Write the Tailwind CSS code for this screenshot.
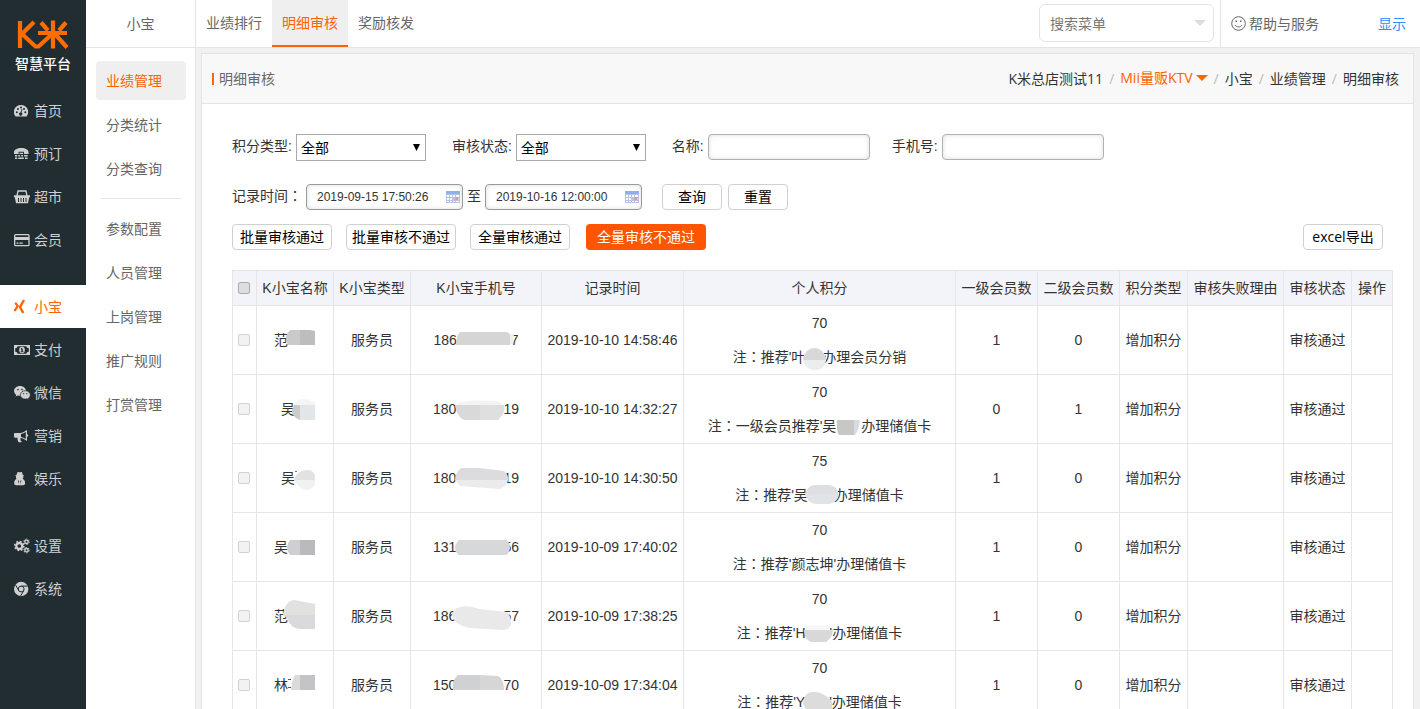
<!DOCTYPE html>
<html lang="zh-CN">
<head>
<meta charset="utf-8">
<title>明细审核</title>
<script src="https://cdn.jsdelivr.net/npm/@tailwindcss/browser@4"></script>
</head>
<body class="flex h-screen overflow-hidden bg-[#f1f1f1] font-['Open_Sans','Noto_Sans_CJK_SC',sans-serif] text-sm leading-5 text-[#333]">

<!-- Primary navigation -->
<nav class="w-[86px] shrink-0 bg-[#222d32] text-[#d0d0d0]">
  <a href="#" class="flex h-[89px] flex-col items-center pt-[19px] text-white">
    <svg class="w-[52px] h-[31px] shrink-0" viewBox="0 0 52 31" fill="none" stroke="#ff6c00" stroke-width="4.200" aria-hidden="true">
      <path d="M3 2v27M17 3 5 15l13.500 12.500h3L34 16M36 1.500v28M21 14h29M24 3.500l7 8M49 3.500l-7 8M38 15l12 13.500"/>
    </svg>
    <span class="mt-1 text-sm font-medium leading-5">智慧平台</span>
  </a>
  <ul>
    <li><a href="#" class="flex h-[43px] items-center gap-1 pl-[14px]">
      <svg class="h-4 w-4 shrink-0" viewBox="0 0 16 16" aria-hidden="true"><path fill="currentColor" d="M7 2a7 7 0 0 0-6 10.800l.6.7h10.800l.6-.7A7 7 0 0 0 7 2z"/><g fill="#222d32"><circle cx="2.800" cy="9.200" r="1"/><circle cx="4" cy="6" r="1"/><circle cx="7" cy="4.600" r="1"/><circle cx="10" cy="6" r="1"/><circle cx="11.300" cy="9.200" r="1"/><path d="m8.500 6.200-1 3.400a1.600 1.600 0 1 1-1-.2l1.200-3.500z"/></g></svg>
      首页</a></li>
    <li><a href="#" class="flex h-[43px] items-center gap-1 pl-[14px]">
      <svg class="h-4 w-4 shrink-0" viewBox="0 0 16 16" fill="currentColor" aria-hidden="true"><path d="M0 6.500C0 3.500 3.200 2 7.300 2s7.300 1.500 7.300 4.500V8H10V5.800H4.600V8H0z"/><path d="M1 9h2.200v1.500H1zM4.300 9h1.800v1.500H4.300zM7.200 9H9v1.500H7.200zM10.100 9h3.500v1.500h-3.500zM1 11.500h2.200V13H1zM4.300 11.500h5.500V13H4.300zM11 11.500h2.600V13H11zM5.500 6.800h3.600V8H5.500z"/></svg>
      预订</a></li>
    <li><a href="#" class="flex h-[43px] items-center gap-1 pl-[14px]">
      <svg class="h-4 w-4 shrink-0" viewBox="0 0 16 16" aria-hidden="true"><path fill="none" stroke="currentColor" stroke-width="1.300" d="M3 7l1-5h8l1 5"/><path fill="currentColor" d="M0 6.300h16v2h-.8l-1.200 6H2l-1.200-6H0z"/><path stroke="#222d32" d="M4.500 9v4M7 9v4M9.500 9v4M12 9v4"/></svg>
      超市</a></li>
    <li><a href="#" class="flex h-[43px] items-center gap-1 pl-[14px]">
      <svg class="h-4 w-4 shrink-0" viewBox="0 0 16 16" aria-hidden="true"><rect x=".7" y="2.700" width="14.300" height="11" rx="1" fill="none" stroke="currentColor" stroke-width="1.300"/><path fill="currentColor" d="M1 5h14v3H1zM2.500 10.500h2v1.200h-2zM5.500 10.500h3.200v1.200H5.500z"/></svg>
      会员</a></li>
    <li class="mt-6"><a href="#" aria-current="page" class="flex h-[43px] items-center gap-1 bg-white pl-[14px] text-[#ff6200]">
      <svg class="h-4 w-4 shrink-0" viewBox="0 0 16 16" fill="none" stroke="currentColor" aria-hidden="true"><path stroke-width="2.400" d="M10 1 6 8l3.300 6"/><path stroke-width="2.200" d="M.8 4.500h1.200l1.700 2.600-2.600 4H0"/></svg>
      小宝</a></li>
    <li><a href="#" class="flex h-[43px] items-center gap-1 pl-[14px]">
      <svg class="h-4 w-4 shrink-0" viewBox="0 0 16 16" aria-hidden="true"><path fill="currentColor" d="M0 3h16v10H0z"/><path fill="#222d32" d="M3.500 4.200h9c0 1.300.8 2 2.300 2v3.600c-1.500 0-2.300.7-2.300 2h-9c0-1.300-.8-2-2.300-2V6.200c1.500 0 2.300-.7 2.300-2z"/><ellipse cx="8" cy="8" rx="2.800" ry="3.300" fill="currentColor"/><path stroke="#222d32" d="M7 6.700h1.200v3M6.700 9.700h2.700"/></svg>
      支付</a></li>
    <li><a href="#" class="flex h-[43px] items-center gap-1 pl-[14px]">
      <svg class="h-4 w-4 shrink-0 overflow-visible" viewBox="0 0 16 16" aria-hidden="true"><path fill="currentColor" d="M6 1C2.700 1 0 3.200 0 6c0 1.500.8 2.800 2.100 3.700l-.5 1.900 2.100-1.200c.7.300 1.500.4 2.300.4 3.300 0 6-2.100 6-4.800S9.300 1 6 1z"/><path fill="currentColor" stroke="#222d32" stroke-width=".7" d="M11.300 5.700c-2.800 0-5 1.900-5 4.200s2.200 4.200 5 4.200c.6 0 1.200-.1 1.800-.3l1.700 1-.4-1.600c1.200-.8 1.900-2 1.900-3.300 0-2.300-2.300-4.200-5-4.200z"/><g fill="#222d32"><circle cx="4" cy="4.600" r=".8"/><circle cx="8" cy="4.600" r=".8"/><circle cx="9.700" cy="8.700" r=".6"/><circle cx="12.900" cy="8.700" r=".6"/></g></svg>
      微信</a></li>
    <li><a href="#" class="flex h-[43px] items-center gap-1 pl-[14px]">
      <svg class="h-4 w-4 shrink-0" viewBox="0 0 16 16" aria-hidden="true"><path fill="currentColor" d="M13 2v4.200a1.200 1.200 0 0 1 0 2.400V13c-2-1.700-4-2.900-6.300-3.100-.6.900.1 1.600-.3 2.300.3.700.9 1.100 1.500 1.600-.9.700-3 .7-3.700 0-.3-1.300-1.100-2.500-.6-4H1.200A1.200 1.200 0 0 1 0 8.600V6.300c0-.7.5-1.200 1.200-1.200H5C7.800 5.100 10.500 4 13 2z"/><path fill="#222d32" d="M7 6.100c1.700-.3 3.300-1 4.800-2v6.800c-1.500-1-3.100-1.700-4.800-2z"/></svg>
      营销</a></li>
    <li><a href="#" class="flex h-[43px] items-center gap-1 pl-[14px]">
      <svg class="h-4 w-4 shrink-0" viewBox="0 0 16 16" aria-hidden="true"><path fill="currentColor" d="M3.300 1.500C4 .5 4.800 1.300 5.700 1.300S7.500.5 8.100 1.500l.7 2.500 1.500.7-1 .6c.1 1 0 1.800-.6 2.700 1.500.4 2.400 2 2.400 4 0 1.500-.7 2.200-2 2.200H2.200C.9 14.200.2 13.500.2 12c0-2 .9-3.600 2.300-4-.5-.9-.7-1.700-.5-2.700l-1-.6L2.500 4z"/><path fill="#222d32" d="M4 9l1.100 1.100L4.700 13zM7.400 9 6.300 10.100l.4 2.900z"/></svg>
      娱乐</a></li>
    <li class="mt-6"><a href="#" class="flex h-[43px] items-center gap-1 pl-[14px]">
      <svg class="h-4 w-4 shrink-0" viewBox="0 0 16 16" fill="none" stroke="currentColor" aria-hidden="true"><circle cx="5.300" cy="8" r="3" stroke-width="2.300"/><circle cx="5.300" cy="8" r="4.600" stroke-width="1.500" stroke-dasharray="1.800 1.810"/><circle cx="12.500" cy="3.800" r="1.700" stroke-width="1.400"/><circle cx="12.500" cy="3.800" r="2.700" stroke-dasharray="1.400 1.430"/><circle cx="12.500" cy="12.200" r="1.700" stroke-width="1.400"/><circle cx="12.500" cy="12.200" r="2.700" stroke-dasharray="1.400 1.430"/></svg>
      设置</a></li>
    <li><a href="#" class="flex h-[43px] items-center gap-1 pl-[14px]">
      <svg class="h-4 w-4 shrink-0" viewBox="0 0 16 16" aria-hidden="true"><circle cx="7.200" cy="8" r="7.200" fill="currentColor"/><circle cx="7.200" cy="8" r="2.900" fill="none" stroke="#222d32"/><path fill="none" stroke="#222d32" d="M7.200 5.100h6.400M4.700 9.500 1.600 4M9.700 9.500l-3.200 5.700"/></svg>
      系统</a></li>
  </ul>
</nav>

<!-- Secondary navigation -->
<nav class="w-[110px] shrink-0 border-r border-[#e4e4e4] bg-white text-[#666]">
  <h2 class="flex h-12 items-center justify-center border-b border-[#e4e4e4]">小宝</h2>
  <ul class="flex flex-col gap-[5px] px-[10px] pt-[13px]">
    <li><a href="#" aria-current="page" class="flex h-[39px] w-[90px] items-center rounded-sm bg-[#efefef] pl-[10px] text-[#ff6200]">业绩管理</a></li>
    <li><a href="#" class="flex h-[39px] items-center pl-[10px]">分类统计</a></li>
    <li><a href="#" class="flex h-[39px] items-center pl-[10px]">分类查询</a></li>
    <li aria-hidden="true" class="my-[5px] ml-[5px] h-px w-20 bg-[#e4e4e4]"></li>
    <li><a href="#" class="flex h-[39px] items-center pl-[10px]">参数配置</a></li>
    <li><a href="#" class="flex h-[39px] items-center pl-[10px]">人员管理</a></li>
    <li><a href="#" class="flex h-[39px] items-center pl-[10px]">上岗管理</a></li>
    <li><a href="#" class="flex h-[39px] items-center pl-[10px]">推广规则</a></li>
    <li><a href="#" class="flex h-[39px] items-center pl-[10px]">打赏管理</a></li>
  </ul>
</nav>

<div class="flex min-w-0 flex-1 flex-col">
  <header class="flex h-12 shrink-0 border-b border-[#e4e4e4] bg-white text-[#666]">
    <nav class="flex">
      <a href="#" class="flex items-center border-b-2 border-transparent px-[10px]">业绩排行</a>
      <a href="#" aria-current="page" class="flex items-center border-b-2 border-[#ff6200] bg-[#efefef] px-[10px] text-[#ff6200]">明细审核</a>
      <a href="#" class="flex items-center border-b-2 border-transparent px-[10px]">奖励核发</a>
    </nav>
    <div class="relative my-1 mr-[6px] ml-auto h-[38px] w-[175px]">
      <input type="text" aria-label="搜索菜单" placeholder="搜索菜单" class="h-full w-full rounded-md border border-[#e4e4e4] bg-white pr-7 pl-[10px] text-sm outline-none placeholder:text-[#777]">
      <svg class="absolute top-4 right-2 h-[6px] w-3" viewBox="0 0 12 6" fill="#ddd" aria-hidden="true"><path d="M0 0h12L6 6z"/></svg>
    </div>
    <div class="flex w-[200px] items-center justify-between border-l border-[#e4e4e4] pr-[14px] pl-[10px]">
      <a href="#" class="flex items-center gap-[3px]">
        <svg class="h-[15px] w-[15px]" viewBox="0 0 15 15" fill="none" stroke="#666" aria-hidden="true"><circle cx="7.500" cy="7.500" r="6.800"/><path d="M4 9c1.200 2.600 5.800 2.600 7 0"/><path fill="#666" stroke="none" d="M4.500 4.500H6V6H4.500zM9 4.500h1.500V6H9z"/></svg>
        帮助与服务</a>
      <a href="#" class="text-[#2d8cff]">显示</a>
    </div>
  </header>

  <main class="mt-[5px] mr-[6px] ml-[5px] flex-1 border border-[#e4e4e4] bg-white">
    <div class="flex h-[50px] items-center justify-between border-b border-[#e4e4e4] bg-[#f8f8f8] pr-[14px] pl-[10px]">
      <h1 class="flex items-center gap-[5px] text-[#666]"><span class="h-3 w-[2px] bg-[#ff6200]"></span>明细审核</h1>
      <nav class="flex items-center gap-[6px]">
        <a href="#">K米总店测试11</a><span class="text-[#bbb]">/</span>
        <a href="#" class="flex items-center gap-[3px] pb-[2px] text-[#ff6200]">Mii量贩KTV<svg class="h-[6px] w-3" viewBox="0 0 12 6" fill="currentColor" aria-hidden="true"><path d="M0 0h12L6 6z"/></svg></a><span class="text-[#bbb]">/</span>
        <a href="#">小宝</a><span class="text-[#bbb]">/</span>
        <a href="#">业绩管理</a><span class="text-[#bbb]">/</span>
        <a href="#">明细审核</a>
      </nav>
    </div>

    <div class="pt-[30px] pr-5 pl-[30px] font-['Liberation_Sans','Noto_Sans_CJK_SC',sans-serif]">
      <form>
        <div class="flex h-[27px] items-start">
          <label for="type" class="mr-1 leading-6">积分类型:</label>
          <span class="relative mr-[26px]"><select id="type" class="block h-[27px] w-[130px] appearance-none border border-[#a9a9a9] bg-white pl-1 text-sm text-black"><option>全部</option></select>
            <svg class="pointer-events-none absolute top-[10px] right-[6px] h-[7px] w-[7px]" viewBox="0 0 7 7" aria-hidden="true"><path d="M0 0h7L3.500 7z"/></svg></span>
          <label for="status" class="mr-1 leading-6">审核状态:</label>
          <span class="relative mr-[26px]"><select id="status" class="block h-[27px] w-[130px] appearance-none border border-[#a9a9a9] bg-white pl-1 text-sm text-black"><option>全部</option></select>
            <svg class="pointer-events-none absolute top-[10px] right-[6px] h-[7px] w-[7px]" viewBox="0 0 7 7" aria-hidden="true"><path d="M0 0h7L3.500 7z"/></svg></span>
          <label for="name" class="mr-1 leading-6">名称:</label>
          <input id="name" type="text" class="mr-[22px] h-[26px] w-[162px] rounded border border-[#b0b0b0] bg-white px-2 shadow-[inset_0_0_5px_#ddd]">
          <label for="phone" class="mr-1 leading-6">手机号:</label>
          <input id="phone" type="text" class="h-[26px] w-[162px] rounded border border-[#b0b0b0] bg-white px-2 shadow-[inset_0_0_5px_#ddd]">
        </div>

        <div class="mt-[23px] flex h-[26px] items-start">
          <label for="from" class="mr-1 leading-6">记录时间<span class="font-['Noto_Sans_CJK_TC'] leading-none" lang="zh-TW">：</span></label>
          <span class="relative"><input id="from" type="text" value="2019-09-15 17:50:26" class="block h-[26px] w-[157px] rounded border border-[#999] bg-white pl-[10px] text-xs shadow-[inset_0_0_5px_#ddd]">
            <svg class="absolute top-[6px] right-[3px] h-[14px] w-[14px]" viewBox="0 0 14 14" aria-hidden="true"><path fill="#b3c3e3" d="M0 1h14v12H0z"/><path fill="#8fb0ea" d="M0 1h14v3H0z"/><path fill="#fff" d="M1 5h2v2H1zM4 5h2v2H4zM7 5h2v2H7zM10 5h3v2h-3zM1 8h2v2H1zM4 8h2v2H4zM10 8h3v2h-3zM1 11h2v1H1zM4 11h2v1H4zM7 11h2v1H7zM10 11h3v1h-3z"/><path fill="#e9977a" d="M9.500 7h3v3h-3z"/></svg></span>
          <label for="to" class="mx-1 leading-6">至</label>
          <span class="relative"><input id="to" type="text" value="2019-10-16 12:00:00" class="block h-[26px] w-[157px] rounded border border-[#999] bg-white pl-[10px] text-xs shadow-[inset_0_0_5px_#ddd]">
            <svg class="absolute top-[6px] right-[3px] h-[14px] w-[14px]" viewBox="0 0 14 14" aria-hidden="true"><path fill="#b3c3e3" d="M0 1h14v12H0z"/><path fill="#8fb0ea" d="M0 1h14v3H0z"/><path fill="#fff" d="M1 5h2v2H1zM4 5h2v2H4zM7 5h2v2H7zM10 5h3v2h-3zM1 8h2v2H1zM4 8h2v2H4zM10 8h3v2h-3zM1 11h2v1H1zM4 11h2v1H4zM7 11h2v1H7zM10 11h3v1h-3z"/><path fill="#e9977a" d="M9.500 7h3v3h-3z"/></svg></span>
          <button type="button" class="ml-5 h-[26px] w-[60px] rounded border border-[#d0d0d0] bg-white text-black">查询</button>
          <button type="reset" class="ml-[6px] h-[26px] w-[60px] rounded border border-[#d0d0d0] bg-white text-black">重置</button>
        </div>

        <div class="mt-[14px] mr-[10px] flex items-center text-black">
          <button type="button" class="mr-[14px] h-[26px] w-[100px] rounded border border-[#d0d0d0] bg-white">批量审核通过</button>
          <button type="button" class="mr-[14px] h-[26px] w-[110px] rounded border border-[#d0d0d0] bg-white">批量审核不通过</button>
          <button type="button" class="mr-4 h-[26px] w-[100px] rounded border border-[#d0d0d0] bg-white">全量审核通过</button>
          <button type="button" class="h-[26px] w-[120px] rounded bg-[#ff5500] text-white">全量审核不通过</button>
          <button type="button" class="ml-auto h-[26px] w-20 rounded border border-[#d0d0d0] bg-white font-['Open_Sans','Noto_Sans_CJK_SC',sans-serif]">excel导出</button>
        </div>
      </form>

      <table class="mt-5 w-full table-fixed border-collapse text-center whitespace-nowrap [&_td]:border [&_td]:border-[#e6e6e6] [&_td]:p-0 [&_th]:border [&_th]:border-[#e6e6e6] [&_th]:p-0 [&_th]:font-normal">
        <colgroup><col class="w-6"><col class="w-[77px]"><col class="w-[77px]"><col class="w-[131px]"><col class="w-[142px]"><col><col class="w-[82px]"><col class="w-[82px]"><col class="w-[68px]"><col class="w-[96px]"><col class="w-[68px]"><col class="w-[41px]"></colgroup>
        <thead class="bg-[#f3f4f9]">
          <tr class="h-[35px]">
            <th scope="col"><input type="checkbox" aria-label="全选" class="ml-[5px] block h-3 w-3 appearance-none rounded-[2px] border border-[#aaa] bg-[#dedede]"></th>
            <th scope="col">K小宝名称</th><th scope="col">K小宝类型</th><th scope="col">K小宝手机号</th><th scope="col">记录时间</th><th scope="col">个人积分</th><th scope="col">一级会员数</th><th scope="col">二级会员数</th><th scope="col">积分类型</th><th scope="col">审核失败理由</th><th scope="col">审核状态</th><th scope="col">操作</th>
          </tr>
        </thead>
        <tbody>
          <tr class="h-[69px]">
            <td><input type="checkbox" aria-label="选择第1行" class="ml-[5px] block h-3 w-3 appearance-none rounded-[2px] border border-[#d2d2d2] bg-[#f2f2f2]"></td>
            <td>范<span class="relative inline-block h-5 w-7 align-top"><svg class="absolute top-0 left-0 h-5 w-7 overflow-visible" viewBox="0 0 28 20" aria-hidden="true"><path fill="#cacaca" d="M2 0h10v15H0q-5-8 2-15z"/><path fill="#bdbdc0" d="M12 0h10l5 1v14H12z"/></svg></span></td>
            <td>服务员</td>
            <td>186<span class="relative inline-block h-5 w-[54px] align-top"><svg class="absolute top-0 left-0 h-5 w-[54px] overflow-visible" viewBox="0 0 54 20" aria-hidden="true"><path fill="#d5d5d6" d="M3 2h45q4 0 5 3v10H-1q0-9 4-13z"/><path fill="#f0f0f0" d="M53 4h4l-1 10h-3z"/></svg></span>7</td>
            <td>2019-10-10 14:58:46</td>
            <td class="leading-[34px]">70<br>注<span class="font-['Noto_Sans_CJK_TC'] leading-none" lang="zh-TW">：</span>推荐'叶<span class="relative inline-block h-[34px] w-[17px] align-top"><svg class="absolute top-0 left-0 h-[34px] w-[17px] overflow-visible" viewBox="0 0 17 34" aria-hidden="true"><path fill="#d8d8d9" d="M-2 20C-1 5 19 3 21 20z"/><path fill="#ededee" d="M-2 20h23C19 34 2 34-2 20z"/></svg></span>办理会员分销</td>
            <td>1</td><td>0</td><td>增加积分</td><td></td><td>审核通过</td><td></td>
          </tr>
          <tr class="h-[69px]">
            <td><input type="checkbox" aria-label="选择第2行" class="ml-[5px] block h-3 w-3 appearance-none rounded-[2px] border border-[#d2d2d2] bg-[#f2f2f2]"></td>
            <td>吴<span class="relative inline-block h-5 w-[14px] align-top"><svg class="absolute top-0 left-0 h-5 w-[14px] overflow-visible" viewBox="0 0 14 20" aria-hidden="true"><path fill="#f4f4f4" d="M-2 6Q6-5 20 4v3H-2z"/><path fill="#cbcbcc" d="M-1 6h6v15q-12-5-6-15z"/><path fill="#e3e6e8" d="M5 6h15v15H5z"/></svg></span></td>
            <td>服务员</td>
            <td>180<span class="relative inline-block h-5 w-[47px] align-top"><svg class="absolute top-0 left-0 h-5 w-[47px] overflow-visible" viewBox="0 0 47 20" aria-hidden="true"><path fill="#f3f3f3" d="M0 6q4-6 42-4l5 4z"/><path fill="#d9d9da" d="M-1 6h25v15H8q-7-3-9-15z"/><path fill="#dfdfe0" d="M24 6h24q2 8-6 15H24z"/></svg></span>19</td>
            <td>2019-10-10 14:32:27</td>
            <td class="leading-[34px]">70<br>注<span class="font-['Noto_Sans_CJK_TC'] leading-none" lang="zh-TW">：</span>一级会员推荐'吴<span class="relative inline-block h-[34px] w-[25px] align-top"><svg class="absolute top-0 left-0 h-[34px] w-[25px] overflow-visible" viewBox="0 0 25 34" aria-hidden="true"><path fill="#c7c8c5" d="M1 11h19l-1 15H3q-3-4-2-15z"/><path fill="#d8dce2" d="M18 11h6q-1 10-5 15h-1z"/></svg></span>办理储值卡</td>
            <td>0</td><td>1</td><td>增加积分</td><td></td><td>审核通过</td><td></td>
          </tr>
          <tr class="h-[69px]">
            <td><input type="checkbox" aria-label="选择第3行" class="ml-[5px] block h-3 w-3 appearance-none rounded-[2px] border border-[#d2d2d2] bg-[#f2f2f2]"></td>
            <td>吴<span class="relative inline-block h-5 w-[14px] align-top"><svg class="absolute top-0 left-0 h-5 w-[14px] overflow-visible" viewBox="0 0 14 20" aria-hidden="true"><path fill="#e2e2e4" d="M-1 12q3-10 13-10 6 0 8 5v5z"/><path fill="#f0f2f2" d="M-1 12h21v5q-4 5-9 5Q3 20-1 12z"/><path fill="#777" d="M0 3h2v1H0z"/></svg></span></td>
            <td>服务员</td>
            <td>180<span class="relative inline-block h-5 w-[47px] align-top"><svg class="absolute top-0 left-0 h-5 w-[47px] overflow-visible" viewBox="0 0 47 20" aria-hidden="true"><path fill="#dcdcdf" d="M-1 12Q0 2 6 0h18l24 3q5 4 4 9z"/><path fill="#ebebec" d="M-1 12h53q-1 7-9 9L4 18z"/></svg></span>19</td>
            <td>2019-10-10 14:30:50</td>
            <td class="leading-[34px]">75<br>注<span class="font-['Noto_Sans_CJK_TC'] leading-none" lang="zh-TW">：</span>推荐'吴<span class="relative inline-block h-[34px] w-[26px] align-top"><svg class="absolute top-0 left-0 h-[34px] w-[26px] overflow-visible" viewBox="0 0 26 34" aria-hidden="true"><path fill="#dedfe0" d="M-3 16Q0 7 7 7h14q8 1 10 9z"/><path fill="#e1e4e6" d="M-3 16h34q-1 8-10 10H7q-8-2-10-10z"/></svg></span>办理储值卡</td>
            <td>1</td><td>0</td><td>增加积分</td><td></td><td>审核通过</td><td></td>
          </tr>
          <tr class="h-[69px]">
            <td><input type="checkbox" aria-label="选择第4行" class="ml-[5px] block h-3 w-3 appearance-none rounded-[2px] border border-[#d2d2d2] bg-[#f2f2f2]"></td>
            <td>吴<span class="relative inline-block h-5 w-7 align-top"><svg class="absolute top-0 left-0 h-5 w-7 overflow-visible" viewBox="0 0 28 20" aria-hidden="true"><path fill="#cecfd2" d="M2 3h10v15H2q-6-7 0-15z"/><path fill="#bababd" d="M12 3h15v15H12z"/></svg></span></td>
            <td>服务员</td>
            <td>131<span class="relative inline-block h-5 w-[47px] align-top"><svg class="absolute top-0 left-0 h-5 w-[47px] overflow-visible" viewBox="0 0 47 20" aria-hidden="true"><path fill="#d7d8d9" d="M3 3h48q6 7 0 15H3q-8-7 0-15z"/></svg></span>56</td>
            <td>2019-10-09 17:40:02</td>
            <td class="leading-[34px]">70<br>注<span class="font-['Noto_Sans_CJK_TC'] leading-none" lang="zh-TW">：</span>推荐'颜志坤'办理储值卡</td>
            <td>1</td><td>0</td><td>增加积分</td><td></td><td>审核通过</td><td></td>
          </tr>
          <tr class="h-[69px]">
            <td><input type="checkbox" aria-label="选择第5行" class="ml-[5px] block h-3 w-3 appearance-none rounded-[2px] border border-[#d2d2d2] bg-[#f2f2f2]"></td>
            <td>范<span class="relative inline-block h-5 w-7 align-top"><svg class="absolute top-0 left-0 h-5 w-7 overflow-visible" viewBox="0 0 28 20" aria-hidden="true"><path fill="#e1e1e0" d="M-5 9Q-3-5 6-6l21 4v11z"/><path fill="#dadadc" d="M-5 9h32v14H12Q3 23-1 12z"/></svg></span></td>
            <td>服务员</td>
            <td>186<span class="relative inline-block h-5 w-[47px] align-top"><svg class="absolute top-0 left-0 h-5 w-[47px] overflow-visible" viewBox="0 0 47 20" aria-hidden="true"><path fill="#e9e9ea" d="M1 2q10-4 22 1l28 3q4 3 4 13-3 5-7 5l-34-2Q-2 19-4 9-3 4 1 2z"/></svg></span>57</td>
            <td>2019-10-09 17:38:25</td>
            <td class="leading-[34px]">70<br>注<span class="font-['Noto_Sans_CJK_TC'] leading-none" lang="zh-TW">：</span>推荐'H<span class="relative inline-block h-[34px] w-6 align-top"><svg class="absolute top-0 left-0 h-[34px] w-6 overflow-visible" viewBox="0 0 24 34" aria-hidden="true"><path fill="#f7f7f7" d="M0 9h24v6H0z"/><path fill="#d8d8d9" d="M-2 14h29q0 7-7 12H5q-7-3-7-12z"/></svg></span>'办理储值卡</td>
            <td>1</td><td>0</td><td>增加积分</td><td></td><td>审核通过</td><td></td>
          </tr>
          <tr class="h-[69px]">
            <td><input type="checkbox" aria-label="选择第6行" class="ml-[5px] block h-3 w-3 appearance-none rounded-[2px] border border-[#d2d2d2] bg-[#f2f2f2]"></td>
            <td>林<span class="relative inline-block h-5 w-7 align-top"><svg class="absolute top-0 left-0 h-5 w-7 overflow-visible" viewBox="0 0 28 20" aria-hidden="true"><path fill="#dcdbdc" d="M7 0h5v15H3q1-11 4-15z"/><path fill="#c4c4c7" d="M12 0h15v15H12z"/><path fill="#555" d="M0 4h3v1H0zM0 12h3v1H0z"/></svg></span></td>
            <td>服务员</td>
            <td>150<span class="relative inline-block h-5 w-[47px] align-top"><svg class="absolute top-0 left-0 h-5 w-[47px] overflow-visible" viewBox="0 0 47 20" aria-hidden="true"><path fill="#cfd1d2" d="M2 0h22v15H-3Q-4 4 2 0z"/><path fill="#d7d6d7" d="M24 0l18 1q6 3 6 14H24z"/></svg></span>70</td>
            <td>2019-10-09 17:34:04</td>
            <td class="leading-[34px]">70<br>注<span class="font-['Noto_Sans_CJK_TC'] leading-none" lang="zh-TW">：</span>推荐'Y<span class="relative inline-block h-[34px] w-6 align-top"><svg class="absolute top-0 left-0 h-[34px] w-6 overflow-visible" viewBox="0 0 24 34" aria-hidden="true"><path fill="#dcdcdd" d="M-2 18Q0 6 8 7q9-1 19 9v14H3z"/></svg></span>'办理储值卡</td>
            <td>1</td><td>0</td><td>增加积分</td><td></td><td>审核通过</td><td></td>
          </tr>
        </tbody>
      </table>
    </div>
  </main>
</div>
</body>
</html>
